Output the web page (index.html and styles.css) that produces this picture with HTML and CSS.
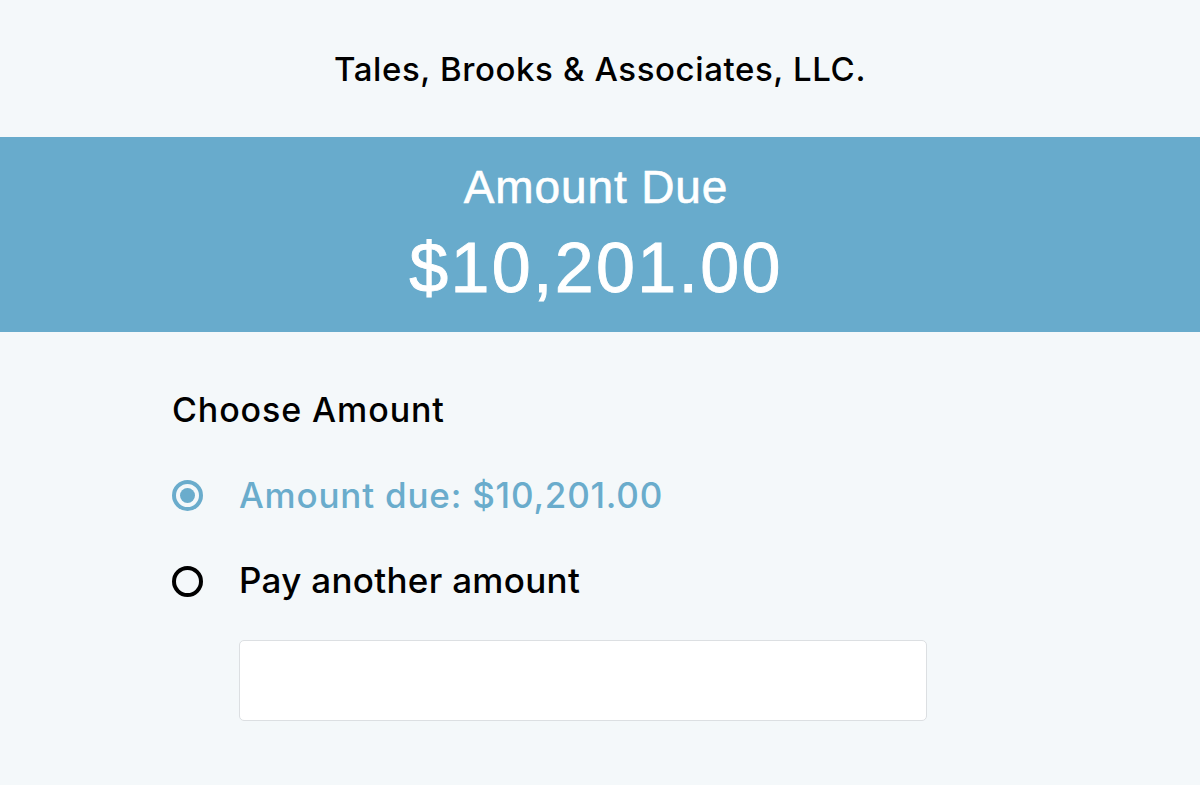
FILE: index.html
```html
<!DOCTYPE html>
<html>
<head>
<meta charset="utf-8">
<link rel="stylesheet" href="styles.css">
</head>
<body>
<header class="company">Tales, Brooks &amp; Associates, LLC.</header>
<section class="banner">
  <div class="banner-label">Amount Due</div>
  <div class="banner-amount">$10,201.00</div>
</section>
<main class="choose">
  <h2 class="choose-title">Choose Amount</h2>
  <div class="option selected">
    <span class="radio"></span>
    <span class="option-label">Amount due: $10,201.00</span>
  </div>
  <div class="option">
    <span class="radio"></span>
    <span class="option-label">Pay another amount</span>
  </div>
  <div class="input-wrap"><div class="amount-input"></div></div>
</main>
</body>
</html>
```
FILE: styles.css
```css
html, body {
  margin: 0;
  padding: 0;
  background: #f4f8fa;
  width: 1200px;
  height: 785px;
  overflow: hidden;
  font-family: Inter, "Liberation Sans", sans-serif;
  color: #000;
}
.company {
  height: 137px;
  display: flex;
  align-items: center;
  justify-content: center;
  font-size: 33px;
  font-weight: 500;
  letter-spacing: 0.6px;
  box-sizing: border-box;
}
.banner {
  height: 195px;
  background: #68abcc;
  color: #fff;
  font-family: "Liberation Sans", Arial, sans-serif;
  text-align: center;
  display: flex;
  flex-direction: column;
  align-items: center;
  padding-top: 26px;
  padding-right: 8px;
  box-sizing: border-box;
  -webkit-text-stroke: 0.6px #fff;
}
.banner-label {
  font-size: 46px;
  line-height: 48px;
  letter-spacing: 0.9px;
}
.banner-amount {
  font-size: 70px;
  line-height: 80px;
  margin-top: 17px;
  letter-spacing: 2.3px;
  -webkit-text-stroke: 0.9px #fff;
}
.choose {
  padding: 56px 0 0 172px;
}
.choose-title {
  margin: 0;
  font-size: 34px;
  font-weight: 500;
  line-height: 44px;
  letter-spacing: 0.9px;
}
.option {
  display: flex;
  align-items: center;
  gap: 36px;
  height: 44px;
  font-size: 35px;
  font-weight: 500;
  letter-spacing: 0.8px;
}
.option.selected {
  margin-top: 41px;
  color: #6aaccc;
}
.option + .option {
  margin-top: 41px;
  letter-spacing: 0.3px;
}
.radio {
  width: 31px;
  height: 31px;
  border-radius: 50%;
  border: 4px solid #000;
  box-sizing: border-box;
  flex: none;
  position: relative;
}
.option + .option .radio {
  margin-top: 3px;
}
.selected .radio {
  border-color: #6aaccc;
}
.selected .radio::after {
  content: "";
  position: absolute;
  left: 4px;
  top: 4px;
  width: 15px;
  height: 15px;
  border-radius: 50%;
  background: #6aaccc;
}
.input-wrap {
  padding: 38px 0 0 67px;
}
.amount-input {
  width: 688px;
  height: 81px;
  background: #fff;
  border: 1px solid #dcdfe2;
  border-radius: 5px;
  box-sizing: border-box;
}
```
